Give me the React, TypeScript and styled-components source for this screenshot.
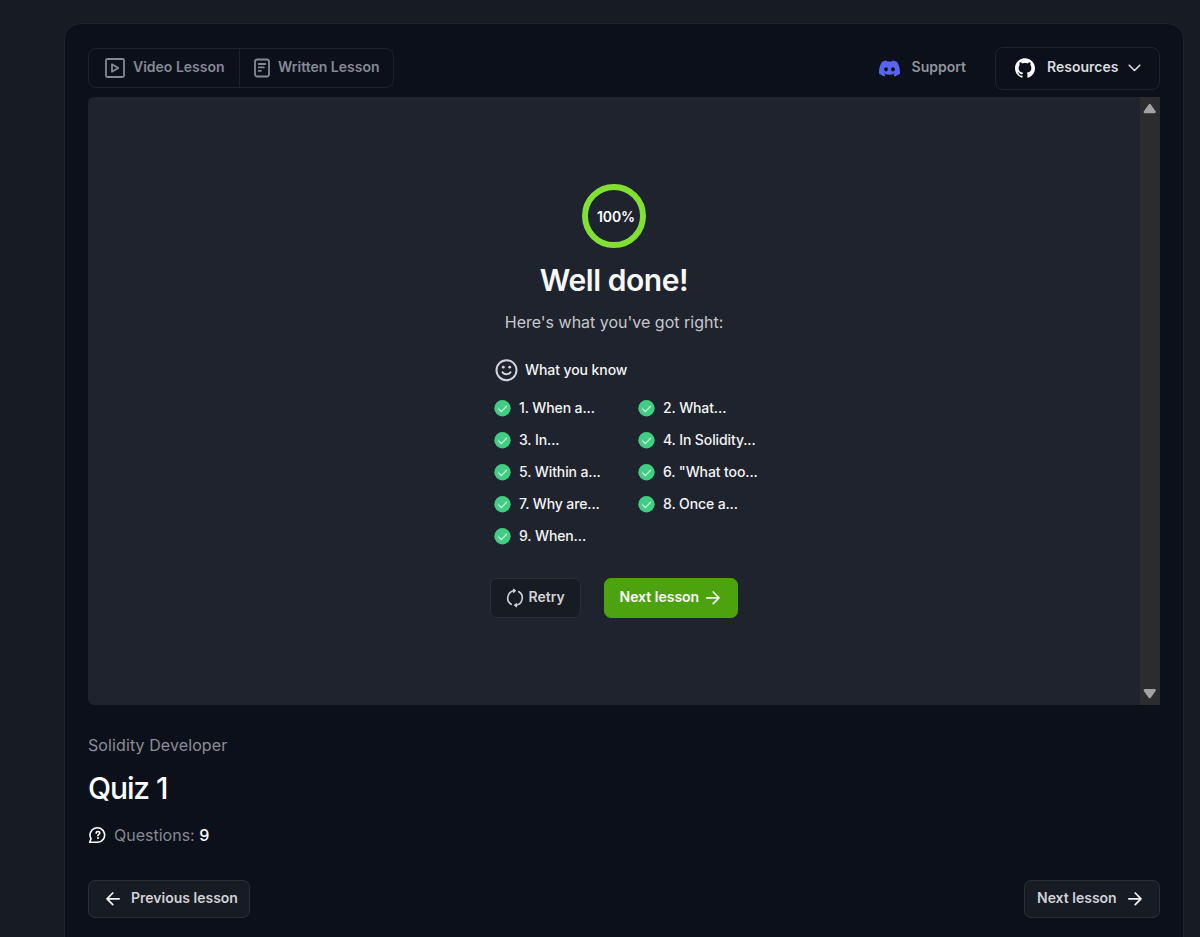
import React from 'react';
import styled, { createGlobalStyle } from 'styled-components';
import { SiDiscord, SiGithub } from 'react-icons/si';

const GlobalStyle = createGlobalStyle`
  * { box-sizing: border-box; }
  body { margin: 0; background: #171b24; font-family: Inter, "Liberation Sans", sans-serif; overflow: hidden; }
  svg { display: block; flex: none; }
  h1, h2, p, ul { margin: 0; padding: 0; font-weight: inherit; }
  button { font-family: inherit; margin: 0; }
`;

const Page = styled.div`
  height: 937px;
  padding: 23px 16px 0 64px;
  overflow: hidden;
`;

const Shell = styled.main`
  height: 940px;
  padding: 23px 23px 0;
  border: 1px solid #1f232d;
  border-radius: 16px;
  background: #0c101b;
`;

const Toolbar = styled.header`
  display: flex;
  justify-content: space-between;
  height: 43px;
`;

const Tabs = styled.nav`
  display: flex;
  width: 306px;
  height: 40px;
  margin-top: 1px;
  border: 1px solid #1d212b;
  border-radius: 8px;
`;

const Tab = styled.button<{ $width: number; $inset: number; $gap: number }>`
  display: flex;
  align-items: center;
  gap: ${(p) => p.$gap}px;
  width: ${(p) => p.$width}px;
  padding: 0 0 0 ${(p) => p.$inset}px;
  border: 0;
  background: none;
  color: #858993;
  & + & { border-left: 1px solid #1d212b; }
`;

const Label = styled.span<{ $weight?: number; $track?: number; $lift?: number }>`
  padding-bottom: ${(p) => p.$lift ?? 3}px;
  font-size: 14px;
  font-weight: ${(p) => p.$weight ?? 600};
  letter-spacing: ${(p) => p.$track ?? 0}px;
  line-height: 20px;
  white-space: nowrap;
`;

const ToolbarLinks = styled.div`
  display: flex;
`;

const SupportLink = styled.div`
  display: flex;
  align-items: center;
  gap: 12px;
  margin-right: 29px;
  color: #8f939b;
`;

const ResourcesButton = styled.button`
  display: flex;
  align-items: center;
  width: 165px;
  height: 43px;
  padding: 0 0 1px 19px;
  border: 1px solid #1f232d;
  border-radius: 8px;
  background: none;
  color: #d9dbdf;
  ${Label} { margin: 0 10px 0 12px; padding-bottom: 2px; }
`;

const QuizFrame = styled.section`
  display: flex;
  height: 608px;
  margin-top: 7px;
  border-radius: 6px 0 0 6px;
  overflow: hidden;
  background: #1f232d;
`;

const Result = styled.div`
  display: flex;
  flex: 1;
  flex-direction: column;
  align-items: center;
  padding-top: 87px;
`;

const Score = styled.div`
  display: grid;
  place-items: center;
  width: 64px;
  height: 64px;
  padding-left: 4px;
  border: 6px solid #82e035;
  border-radius: 50%;
  color: #fff;
  font-size: 14px;
  font-weight: 600;
  letter-spacing: -0.1px;
`;

const ResultTitle = styled.h2`
  margin-top: 12px;
  color: #f8f8f9;
  font-size: 30px;
  font-weight: 600;
  letter-spacing: -0.45px;
  line-height: 40px;
`;

const ResultText = styled.p`
  margin-top: 10px;
  color: #c6c8cc;
  font-size: 16px;
  line-height: 24px;
`;

const Known = styled.div`
  width: 240px;
  margin-top: 24px;
`;

const KnownHeading = styled.div`
  display: flex;
  align-items: center;
  gap: 7px;
  height: 24px;
  padding-left: 1px;
  color: #f3f4f5;
`;

const Answers = styled.ul`
  display: grid;
  grid-template-columns: 144px 144px;
  grid-auto-rows: 32px;
  margin-top: 10px;
  list-style: none;
`;

const Answer = styled.li`
  display: flex;
  align-items: center;
  gap: 8px;
  color: #f3f4f5;
`;

const Actions = styled.div`
  display: flex;
  gap: 23px;
  margin: 26px 1px 0 0;
`;

const Button = styled.button<{ $width: number; $height: number; $inset: number; $gap: number; $primary?: boolean }>`
  display: flex;
  align-items: center;
  gap: ${(p) => p.$gap}px;
  width: ${(p) => p.$width}px;
  height: ${(p) => p.$height}px;
  padding: 0 0 0 ${(p) => p.$inset}px;
  border: 1px solid ${(p) => (p.$primary ? '#4da30d' : '#2a2e37')};
  border-radius: 7px;
  background: ${(p) => (p.$primary ? '#4da30d' : '#171b24')};
  color: ${(p) => (p.$primary ? '#fff' : '#d0d2d6')};
`;

const Scrollbar = styled.div`
  display: flex;
  flex-direction: column;
  justify-content: space-between;
  align-items: center;
  width: 20px;
  padding: 6px 0;
  background: #2c2c2c;
`;

const Course = styled.p`
  margin-top: 28px;
  color: #8b8e96;
  font-size: 16px;
  letter-spacing: 0.1px;
  line-height: 24px;
`;

const LessonTitle = styled.h1`
  margin-top: 11px;
  color: #fff;
  font-size: 30px;
  font-weight: 500;
  letter-spacing: -1.1px;
  line-height: 40px;
`;

const Questions = styled.div`
  display: flex;
  align-items: center;
  gap: 8px;
  height: 24px;
  margin-top: 15px;
  color: #858891;
  font-size: 16px;
  b { color: #fff; font-weight: 500; }
`;

const Pager = styled.footer`
  display: flex;
  justify-content: space-between;
  margin-top: 33px;
`;

const stroke = { fill: 'none', stroke: 'currentColor', strokeLinecap: 'round', strokeLinejoin: 'round' } as const;

const VideoIcon = () => (
  <svg width="20" height="20" viewBox="0 0 20 20" {...stroke} strokeWidth="1.8">
    <rect x="1" y="1" width="18" height="18" rx="1.5" />
    <path d="M7 6.2v7.6l6.3-3.8z" />
  </svg>
);

const DocumentIcon = () => (
  <svg width="16" height="20" viewBox="0 0 16 20" {...stroke} strokeWidth="1.8">
    <rect x="1" y="1.5" width="14" height="17" rx="2.2" />
    <path d="M4.7 6h6.6M4.7 9.4h5.2M4.7 12.8h2.2" />
  </svg>
);

const ChevronIcon = () => (
  <svg width="13" height="8" viewBox="0 0 13 8" {...stroke} strokeWidth="1.6">
    <path d="M1.2 1.2 6.5 6.5l5.3-5.3" />
  </svg>
);

const SmileIcon = () => (
  <svg width="23" height="23" viewBox="0 0 23 23" {...stroke} stroke="#d5d7dc" strokeWidth="2">
    <circle cx="11.5" cy="11.2" r="10" />
    <path d="M7.6 13.3c1 1.3 2.3 1.9 3.9 1.9s2.9-.6 3.9-1.9" />
    <circle cx="8.3" cy="8.2" r="1.4" fill="#d5d7dc" stroke="none" />
    <circle cx="14.7" cy="8.2" r="1.4" fill="#d5d7dc" stroke="none" />
  </svg>
);

const CheckIcon = () => (
  <svg width="17" height="17" viewBox="0 0 17 17" {...stroke}>
    <circle cx="8.5" cy="8.3" r="8.2" fill="#42cd85" stroke="none" />
    <path d="m4.6 8.8 2.8 2.8 5.4-5.6" stroke="#d4f5e3" strokeWidth="1.1" />
  </svg>
);

const RetryIcon = () => (
  <svg width="18" height="20" viewBox="0 0 18 20" {...stroke} strokeWidth="1.6">
    <path d="M9 2.8A7.3 7.3 0 0 0 5.2 16.3M9 17.2A7.3 7.3 0 0 0 12.8 3.7" />
    <path d="M7.8 1.1 9.5 2.8 7.8 4.5zM10.2 18.9l-1.7-1.7 1.7-1.7z" fill="currentColor" strokeWidth="1" />
  </svg>
);

const ArrowIcon = ({ back }: { back?: boolean }) => (
  <svg width="14" height="14" viewBox="0 0 14 14" {...stroke} stroke="#f3f4f5" strokeWidth="1.7">
    <path d={back ? 'M13.2 6.8H1M6.8 1 1 6.8l5.8 5.8' : 'M.8 6.8H13M7.2 1 13 6.8l-5.8 5.8'} />
  </svg>
);

const QuestionIcon = () => (
  <svg width="18" height="18" viewBox="0 0 18 18" {...stroke} stroke="#fff" strokeWidth="1.6">
    <path d="M1.7 16.3 3 12.7A7.3 7.3 0 1 1 10 16.3z" />
    <path d="M8.1 7.1c.1-1.1.8-1.6 1.8-1.6 1.1 0 1.9.6 1.9 1.6 0 1.3-1.8 1.3-1.8 2.6" />
    <circle cx="10" cy="12" r="1" fill="#fff" stroke="none" />
  </svg>
);

const ScrollArrow = ({ down }: { down?: boolean }) => (
  <svg width="14" height="11" viewBox="0 0 14 11">
    <path
      d={down ? 'M1.9 2.2h9.6L6.7 9z' : 'M1.9 9h9.6L6.7 2.2z'}
      fill="#a2a2a2" stroke="#a2a2a2" strokeWidth="2.6" strokeLinejoin="round"
    />
  </svg>
);

const answers = [
  '1. When a...', '2. What...', '3. In...', '4. In Solidity...', '5. Within a...',
  '6. "What too...', '7. Why are...', '8. Once a...', '9. When...',
];

export default function App() {
  return (
    <Page>
      <GlobalStyle />
      <Shell>
        <Toolbar>
          <Tabs>
            <Tab $width={150} $inset={16} $gap={8}><VideoIcon /><Label>Video Lesson</Label></Tab>
            <Tab $width={154} $inset={14} $gap={8}><DocumentIcon /><Label>Written Lesson</Label></Tab>
          </Tabs>
          <ToolbarLinks>
            <SupportLink>
              <SiDiscord size={21} color="#5865f2" />
              <Label>Support</Label>
            </SupportLink>
            <ResourcesButton>
              <SiGithub size={20} color="#fff" />
              <Label>Resources</Label>
              <ChevronIcon />
            </ResourcesButton>
          </ToolbarLinks>
        </Toolbar>
        <QuizFrame>
          <Result>
            <Score>100%</Score>
            <ResultTitle>Well done!</ResultTitle>
            <ResultText>Here's what you've got right:</ResultText>
            <Known>
              <KnownHeading><SmileIcon /><Label $weight={500} $track={-0.08} $lift={0}>What you know</Label></KnownHeading>
              <Answers>
                {answers.map((text) => (
                  <Answer key={text}><CheckIcon /><Label $weight={500} $track={-0.11} $lift={1}>{text}</Label></Answer>
                ))}
              </Answers>
            </Known>
            <Actions>
              <Button $width={91} $height={40} $inset={15} $gap={5}><RetryIcon /><Label>Retry</Label></Button>
              <Button $width={134} $height={40} $inset={15} $gap={7} $primary><Label>Next lesson</Label><ArrowIcon /></Button>
            </Actions>
          </Result>
          <Scrollbar><ScrollArrow /><ScrollArrow down /></Scrollbar>
        </QuizFrame>
        <Course>Solidity Developer</Course>
        <LessonTitle>Quiz 1</LessonTitle>
        <Questions><QuestionIcon /><span>Questions: <b>9</b></span></Questions>
        <Pager>
          <Button $width={162} $height={38} $inset={17} $gap={11}><ArrowIcon back /><Label>Previous lesson</Label></Button>
          <Button $width={136} $height={38} $inset={12} $gap={11}><Label>Next lesson</Label><ArrowIcon /></Button>
        </Pager>
      </Shell>
    </Page>
  );
}
